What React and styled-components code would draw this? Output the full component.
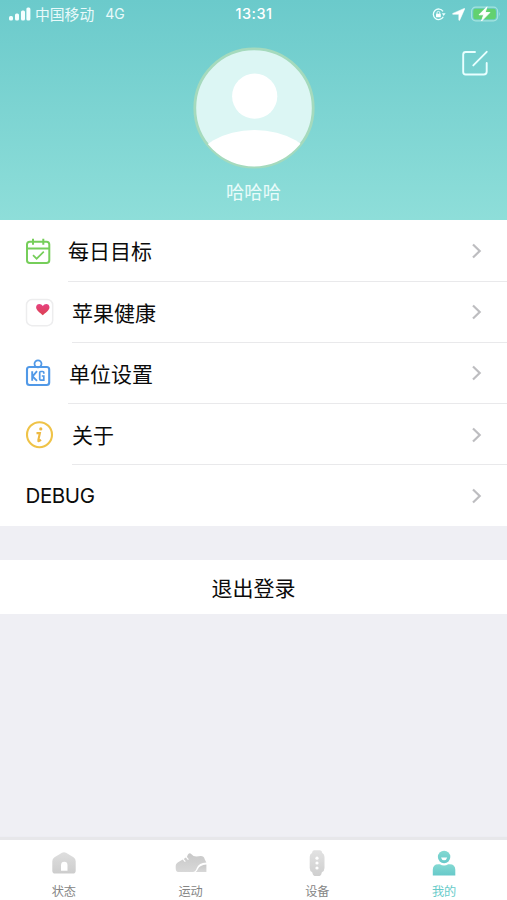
import React from 'react';
import styled, { createGlobalStyle } from 'styled-components';

const GlobalStyle = createGlobalStyle`
  * { box-sizing: border-box; }
  body {
    margin: 0;
    background: #efeff4;
    font-family: Inter, "Noto Sans CJK SC", sans-serif;
  }
  svg { display: block; flex: none; }
`;

const Screen = styled.div`
  width: 507px;
  height: 900px;
  display: flex;
  flex-direction: column;
  background: #efeff4;
  overflow: hidden;
`;

const Header = styled.header`
  height: 220.4px;
  flex: none;
  display: flex;
  flex-direction: column;
  background: linear-gradient(#6bcacb, #8eded9);
  color: #fff;
`;

const StatusBar = styled.div`
  height: 28px;
  display: grid;
  grid-template-columns: 1fr auto 1fr;
  align-items: center;
  padding: 0 6px 0 9px;
`;

const Carrier = styled.div`
  display: flex;
  align-items: center;
  font-size: 14.8px;
  line-height: 20px;
  color: #e9fafa;
  white-space: nowrap;
`;

const CarrierName = styled.span`
  margin-left: 4px;
  padding-top: 1px;
`;

const Network = styled.span`
  margin-left: 11px;
  font-size: 14px;
`;

const Clock = styled.time`
  font-size: 14.5px;
  font-weight: 500;
  letter-spacing: 0.45px;
  line-height: 20px;
  margin-right: 2px;
`;

const StatusIcons = styled.div`
  display: flex;
  align-items: center;
  justify-content: flex-end;
  gap: 6px;
`;

const Profile = styled.div`
  flex: 1;
  display: grid;
  grid-template-columns: 1fr auto 1fr;
  align-items: start;
  padding: 19px 18px 0;
`;

const Identity = styled.div`
  grid-column: 2;
  display: flex;
  flex-direction: column;
  align-items: center;
`;

const Nickname = styled.div`
  margin-top: 10px;
  font-size: 18.3px;
  line-height: 27px;
  color: #e9fbfa;
`;

const EditButton = styled.button`
  justify-self: end;
  margin-top: 2px;
  padding: 0;
  border: 0;
  background: none;
`;

const Menu = styled.nav`
  height: 306px;
  flex: none;
  display: flex;
  flex-direction: column;
  background: #fff;
`;

const MenuRow = styled.a`
  flex: 1;
  display: flex;
  align-items: stretch;
  padding-left: 25px;
  color: #0b0b0b;
`;

const IconSlot = styled.span`
  width: ${(p) => p.$width}px;
  flex: none;
  display: flex;
  align-items: center;
`;

const RowBody = styled.span`
  flex: 1;
  display: flex;
  align-items: center;
  justify-content: space-between;
  padding: 1px 24px 0 0;
  border-bottom: ${(p) => (p.$last ? '0' : '1px solid #e9e9eb')};
`;

const RowLabel = styled.span`
  font-size: ${(p) => (p.$latin ? 20.5 : 21)}px;
  line-height: 30px;
  letter-spacing: ${(p) => (p.$latin ? '-0.4px' : '0')};
  padding-top: ${(p) => (p.$latin ? 0 : 3)}px;
  padding-left: ${(p) => p.$inset || 0}px;
`;

const LogoutButton = styled.button`
  height: 54px;
  flex: none;
  margin-top: 34px;
  padding: 3px 0 0;
  border: 0;
  background: #fff;
  color: #0b0b0b;
  font: 21px/30px Inter, "Noto Sans CJK SC", sans-serif;
`;

const TabBar = styled.footer`
  height: 60px;
  flex: none;
  margin-top: auto;
  display: grid;
  grid-template-columns: repeat(4, 1fr);
  background: #fff;
  box-shadow: 0 -3px 1px #e7e7ea;
`;

const Tab = styled.a`
  display: flex;
  flex-direction: column;
  align-items: center;
  padding: 8px 0 0 1px;
  gap: 6px;
  color: ${(p) => (p.$active ? '#67cbc9' : '#858585')};
  font-size: 12.2px;
  line-height: 18px;
`;

const Signal = () => (
  <svg width="22" height="14" viewBox="0 0 22 14" fill="#f3ffff">
    <rect x="0" y="9" width="4" height="4.5" rx="1.5" />
    <rect x="6" y="6.5" width="4" height="7" rx="1.5" />
    <rect x="12" y="3.5" width="4" height="10" rx="1.5" />
    <rect x="17.4" y="0.5" width="4" height="13" rx="1.5" />
  </svg>
);

const RotationLock = () => (
  <svg width="14" height="13" viewBox="0 0 14 13" fill="none" stroke="#eaffff">
    <path d="M11 3.3A5.3 5.3 0 1 0 11.3 8.8" strokeWidth="1.3" />
    <path d="M9.8 5.2h3.8l-1.9 2.8z" fill="#eaffff" stroke="none" />
    <rect x="4" y="5.8" width="4.8" height="3.5" rx=".6" fill="#fff" stroke="none" />
    <path d="M5 6V4.8a1.4 1.4 0 0 1 2.8 0V6" />
  </svg>
);

const LocationArrow = () => (
  <svg width="13" height="13" viewBox="0 0 12 12" fill="#fff" stroke="#fff" strokeWidth=".5">
    <path d="M11.3.4c.4-.2.6.1.4.5L7.1 11.2c-.2.5-.8.4-.8-.1V5.8H.9c-.5 0-.6-.6-.1-.8z" />
  </svg>
);

const Battery = () => (
  <svg width="30" height="16" viewBox="0 0 30 16">
    <rect x=".6" y="1.2" width="26" height="13.6" rx="4" fill="none" stroke="#a5e3df" strokeWidth="1.2" />
    <rect x="2.3" y="2.8" width="22.6" height="10.4" rx="2.2" fill="#62d170" />
    <path d="M28.2 5.8q1.5 2.2 0 4.4z" fill="#a5e3df" />
    <path d="M16 .8 8 8.8h4.7L10.5 15l8.4-8.5h-4.8z" fill="#fff" stroke="#fff" strokeWidth=".9" strokeLinejoin="round" />
  </svg>
);

const Avatar = () => (
  <svg width="122" height="122" viewBox="0 0 122 122">
    <defs>
      <clipPath id="face"><circle cx="61" cy="61" r="58.5" /></clipPath>
    </defs>
    <circle cx="61" cy="61" r="59.2" fill="#dcf6f4" stroke="#a5dabd" strokeWidth="2.8" />
    <g clipPath="url(#face)" fill="#fff">
      <circle cx="61.7" cy="49.2" r="22.6" />
      <ellipse cx="61.5" cy="118" rx="58" ry="35" />
    </g>
  </svg>
);

const Edit = () => (
  <svg width="28" height="28" viewBox="0 0 28 28" fill="none" stroke="#e9ffff" strokeWidth="1.9" strokeLinecap="round">
    <path d="M14 3H4.7Q2.2 3 2.2 5.5V23Q2.2 25.5 4.7 25.5H22.7Q25.7 25.5 25.7 22.5V14" />
    <path d="M12.3 16.4 25.7 2.8" />
  </svg>
);

const Calendar = () => (
  <svg width="26" height="28" viewBox="0 0 26 28" fill="none" stroke="#76ce5a" strokeWidth="2">
    <rect x="2" y="4.8" width="22.3" height="21.3" rx="2.8" />
    <path d="M2 11.5h22.3M8 1.8v6M18.3 1.8v6" />
    <path d="m8 18.2 3.6 3.5 7.2-7" strokeWidth="1.7" />
  </svg>
);

const Health = () => (
  <svg width="29" height="29" viewBox="0 0 29 29">
    <defs>
      <linearGradient id="heart" x1="0" y1="0" x2="0" y2="1">
        <stop stopColor="#e74282" />
        <stop offset="1" stopColor="#db4150" />
      </linearGradient>
    </defs>
    <rect x="1.5" y="1.5" width="26.2" height="26.2" rx="5.5" fill="#fff" stroke="#ededee" strokeWidth="1.5" />
    <path d="M17.8 17.2c-2-1.8-6.7-4.8-6.7-7.9 0-4 5-4.4 6.7-1.3 1.7-3.1 6.7-2.7 6.7 1.3 0 3.1-4.7 6.1-6.7 7.9z" fill="url(#heart)" />
  </svg>
);

const Weight = () => (
  <svg width="26" height="28" viewBox="0 0 26 28" fill="none" stroke="#5199e7" strokeWidth="2.1">
    <rect x="2" y="8" width="22.2" height="18" rx="2.5" />
    <circle cx="13" cy="4.8" r="3.5" strokeWidth="1.8" />
    <path d="M7.2 12.2v9.6M12 12.2l-4.4 5.2 4.4 4.4" strokeWidth="1.9" />
    <path d="M18.8 14.7v-1.2q0-1-1-1h-2.1q-1 0-1 1v6.6q0 1.1 1 1.1h3.1V17h-2" strokeWidth="1.7" />
  </svg>
);

const About = () => (
  <svg width="29" height="29" viewBox="0 0 29 29" fill="none" stroke="#efc348">
    <circle cx="14.5" cy="14.7" r="12.5" strokeWidth="2.1" />
    <circle cx="15.8" cy="8.9" r="1.6" fill="#edb942" stroke="none" />
    <path d="M11.5 13.1h3.4l-1.6 7.1q-.4 1.4 1.2.7l1.5-1.2" stroke="#edb942" strokeWidth="2.1" />
  </svg>
);

const Chevron = () => (
  <svg width="12" height="18" viewBox="0 0 12 18" fill="none" stroke="#bdbdc0" strokeWidth="2.2">
    <path d="m2 2.5 6.7 6.5L2 15.5" />
  </svg>
);

const Fade = ({ id, from, to }) => (
  <defs>
    <linearGradient id={id} x1="0" y1="0" x2="0" y2="1">
      <stop stopColor={from} />
      <stop offset="1" stopColor={to} />
    </linearGradient>
  </defs>
);

const HomeIcon = () => (
  <svg width="32" height="29" viewBox="0 0 32 29">
    <Fade id="home" from="#dedede" to="#cdcdcd" />
    <path fillRule="evenodd" fill="url(#home)" d="M14 4.7q2-1.1 4 0l7.5 4.5q2.2 1.5 2.2 4v9.5q0 2.8-2.8 2.8H7.1q-2.8 0-2.8-2.8v-9.5q0-2.5 2.2-4zM13 22.7h6.5v-5.5q0-3.4-3.2-3.4T13 17.2z" />
  </svg>
);

const ShoeIcon = () => (
  <svg width="34" height="29" viewBox="0 0 34 29">
    <Fade id="shoe" from="#c8c8c8" to="#d8d8d8" />
    <path fill="url(#shoe)" d="M1.7 20v-2.2q0-2 2-3.2l5-3 2.1 2.3 1-.7-2.1-2.3 2.1-1.3 2.1 2.4 1-.8-2-2.3.9-2.1q1.4-2.8 3.7-.6 1.9 2.6 5.1 2.4l4.2-.5q3 0 4 3.3l1.6 3q-7.7.4-9.6 5.6-1.2 3.8-4.1 4H4.2q-2.5 0-2.5-4z" />
    <path fill="url(#shoe)" d="M32.4 16.5V24H21.6q1.3-.7 2.2-2.8 2-4.2 8.6-4.7z" />
  </svg>
);

const BandIcon = () => (
  <svg width="20" height="29" viewBox="0 0 20 29">
    <Fade id="band" from="#e2e2e2" to="#cfcfcf" />
    <path fill="url(#band)" d="M5 5q.3-2.7 2-2.7h6Q15 2.3 15.3 5q2.2 1 2.2 4v11q0 3-2.6 4.2-.5 3.3-2.3 3.7H7.5q-1.8-.4-2.3-3.7Q2.7 23 2.7 20V9q0-3 2.3-4z" />
    <g fill="#fff"><circle cx="10" cy="10.2" r="1.6" /><circle cx="10" cy="15" r="1.6" /><circle cx="10" cy="20" r="1.6" /></g>
  </svg>
);

const PersonIcon = () => (
  <svg width="30" height="29" viewBox="0 0 30 29">
    <Fade id="person" from="#83d9d2" to="#67c9ca" />
    <g fill="url(#person)">
      <circle cx="15.1" cy="9" r="6.2" />
      <path d="M3.8 27.5v-5.7q0-5.6 5.6-5.6h1.4q4.2 2.4 8.5 0h1.4q5.6 0 5.6 5.6v5.7z" />
    </g>
    <path d="M12 9.5h6.2q-.7 2.7-3.1 2.7T12 9.5z" fill="#fff" />
  </svg>
);

const rows = [
  { label: '每日目标', Icon: Calendar, slot: 43 },
  { label: '苹果健康', Icon: Health, slot: 47 },
  { label: '单位设置', Icon: Weight, slot: 43, inset: 1 },
  { label: '关于', Icon: About, slot: 47 },
  { label: 'DEBUG', latin: true, inset: 0.5 },
];

const tabs = [
  { label: '状态', Icon: HomeIcon },
  { label: '运动', Icon: ShoeIcon },
  { label: '设备', Icon: BandIcon },
  { label: '我的', Icon: PersonIcon, active: true },
];

export default function App() {
  return (
    <>
      <GlobalStyle />
      <Screen>
        <Header>
          <StatusBar>
            <Carrier>
              <Signal />
              <CarrierName>中国移动</CarrierName>
              <Network>4G</Network>
            </Carrier>
            <Clock>13:31</Clock>
            <StatusIcons>
              <RotationLock />
              <LocationArrow />
              <Battery />
            </StatusIcons>
          </StatusBar>
          <Profile>
            <Identity>
              <Avatar />
              <Nickname>哈哈哈</Nickname>
            </Identity>
            <EditButton aria-label="编辑"><Edit /></EditButton>
          </Profile>
        </Header>
        <Menu>
          {rows.map(({ label, Icon, slot, inset, latin }, i) => (
            <MenuRow key={label}>
              {Icon && <IconSlot $width={slot}><Icon /></IconSlot>}
              <RowBody $last={i === rows.length - 1}>
                <RowLabel $latin={latin} $inset={inset}>{label}</RowLabel>
                <Chevron />
              </RowBody>
            </MenuRow>
          ))}
        </Menu>
        <LogoutButton>退出登录</LogoutButton>
        <TabBar>
          {tabs.map(({ label, Icon, active }) => (
            <Tab key={label} $active={active}>
              <Icon />
              {label}
            </Tab>
          ))}
        </TabBar>
      </Screen>
    </>
  );
}
